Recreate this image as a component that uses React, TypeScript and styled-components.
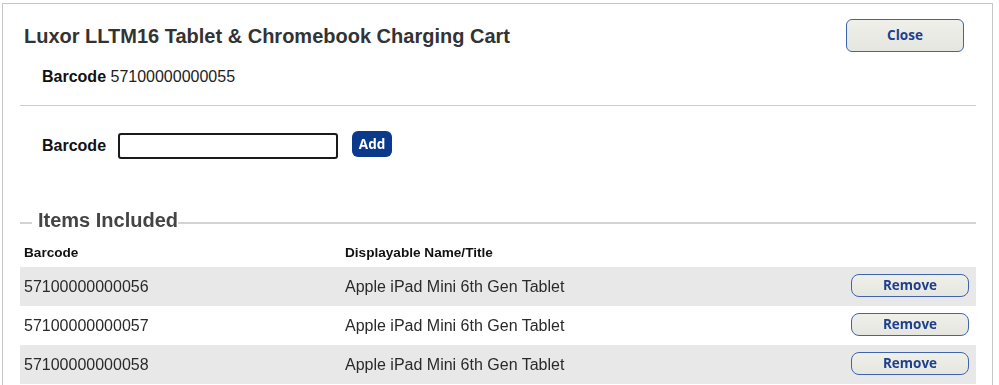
import React from "react";
import styled, { createGlobalStyle } from "styled-components";

const Global = createGlobalStyle`
  html, body { margin: 0; padding: 0; background: #ffffff; }
  body { font-family: "Liberation Sans", Arial, sans-serif; color: #333; }
`;

const Frame = styled.div`
  box-sizing: border-box;
  margin: 3px 0 0 2px;
  width: 991px;
  min-height: 400px;
  border: 1px solid #c6c6c6;
  padding: 0 16px 0 17px;
`;

const Header = styled.div`
  display: flex;
  justify-content: space-between;
  align-items: flex-start;
  padding: 0 12px 0 4px;
`;

const Title = styled.h1`
  margin: 21px 0 0;
  font-size: 20px;
  line-height: 23px;
  font-weight: bold;
  color: #333;
`;

const SoftButton = styled.button<{ $w: number; $h: number; $r: number }>`
  box-sizing: border-box;
  width: ${(p) => p.$w}px;
  height: ${(p) => p.$h}px;
  border-radius: ${(p) => p.$r}px;
  border: 1.5px solid #3f63ad;
  background: linear-gradient(#f0f0eb, #e6e6e0);
  color: #1e3f8c;
  font-family: "Open Sans", "Liberation Sans", sans-serif;
  font-weight: bold;
  font-size: 13.5px;
  line-height: 16px;
  padding: 0 0 1px;
  cursor: pointer;
`;

const CloseButton = styled(SoftButton)`
  margin-top: 15px;
`;

const InfoLine = styled.div`
  margin-top: 16px;
  padding-left: 22px;
  font-size: 16px;
  line-height: 18px;
  color: #222;
`;

const Label = styled.span`
  font-weight: bold;
  color: #111;
`;

const Divider = styled.div`
  margin-top: 19px;
  border-top: 1px solid #cccccc;
`;

const EntryRow = styled.div`
  display: flex;
  align-items: center;
  margin-top: 27px;
  padding-left: 22px;
  height: 26px;
`;

const EntryLabel = styled.label`
  font-size: 16px;
  font-weight: bold;
  color: #111;
  margin-right: 12px;
`;

const TextInput = styled.input`
  box-sizing: border-box;
  width: 220px;
  height: 26px;
  border: 2px solid #1a1a1a;
  border-radius: 3px;
  padding: 0 4px;
  font-size: 14px;
  font-family: "Liberation Sans", Arial, sans-serif;
  outline: none;
`;

const AddButton = styled.button`
  box-sizing: border-box;
  margin-left: 14px;
  margin-top: -4px;
  width: 40px;
  height: 26px;
  border: none;
  border-radius: 6px;
  background: #0b3a8d;
  color: #ffffff;
  font-family: "Open Sans", "Liberation Sans", sans-serif;
  font-weight: bold;
  font-size: 13.5px;
  padding: 0 0 1px;
  cursor: pointer;
`;

const Legend = styled.div`
  display: flex;
  align-items: flex-start;
  margin-top: 50px;
  height: 23px;
`;

const LegendLine = styled.div<{ $grow?: boolean }>`
  height: 2px;
  margin-top: 13px;
  background: #d3d3d3;
  ${(p) => (p.$grow ? "flex: 1;" : "width: 12px;")}
`;

const LegendText = styled.span`
  font-size: 20px;
  line-height: 23px;
  font-weight: bold;
  color: #444;
  padding: 0 0 0 6px;
`;

const Grid = styled.div`
  display: grid;
  grid-template-columns: 321px 1fr 118px;
  align-items: center;
  padding: 0 7px 0 4px;
`;

const HeadRow = styled(Grid)`
  margin-top: 13px;
  margin-bottom: 6px;
  font-size: 13.6px;
  line-height: 16px;
  font-weight: bold;
  color: #111;
`;

const ItemRow = styled(Grid)<{ $shade: boolean }>`
  height: 39px;
  background: ${(p) => (p.$shade ? "#e8e8e8" : "#ffffff")};
  font-size: 16px;
  color: #2a2a2a;
`;

const RemoveButton = styled(SoftButton)`
  margin-top: -2px;
`;

const items = [
  { code: "57100000000056", name: "Apple iPad Mini 6th Gen Tablet" },
  { code: "57100000000057", name: "Apple iPad Mini 6th Gen Tablet" },
  { code: "57100000000058", name: "Apple iPad Mini 6th Gen Tablet" },
];

export default function App() {
  return (
    <>
      <Global />
      <Frame>
        <Header>
          <Title>Luxor LLTM16 Tablet &amp; Chromebook Charging Cart</Title>
          <CloseButton $w={118} $h={33} $r={6}>Close</CloseButton>
        </Header>
        <InfoLine>
          <Label>Barcode</Label> 57100000000055
        </InfoLine>
        <Divider />
        <EntryRow>
          <EntryLabel htmlFor="bc">Barcode</EntryLabel>
          <TextInput id="bc" autoFocus />
          <AddButton>Add</AddButton>
        </EntryRow>
        <Legend>
          <LegendLine />
          <LegendText>Items Included</LegendText>
          <LegendLine $grow />
        </Legend>
        <HeadRow>
          <span>Barcode</span>
          <span>Displayable Name/Title</span>
          <span />
        </HeadRow>
        {items.map((it, i) => (
          <ItemRow key={it.code} $shade={i % 2 === 0}>
            <span>{it.code}</span>
            <span>{it.name}</span>
            <RemoveButton $w={118} $h={23} $r={8}>Remove</RemoveButton>
          </ItemRow>
        ))}
      </Frame>
    </>
  );
}
